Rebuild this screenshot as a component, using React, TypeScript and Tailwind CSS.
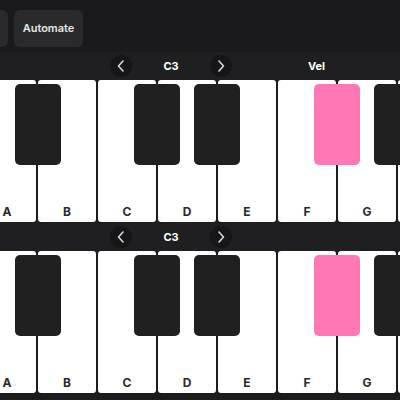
import React from "react";

const whites = ["A", "B", "C", "D", "E", "F", "G", ""];
const blacks: { left: number; pink?: boolean }[] = [
  { left: -46 + 22 },
  { left: 15 + 22 },
  { left: 134 + 22 },
  { left: 194 + 22 },
  { left: 314 + 22, pink: true },
  { left: 374 + 22 },
];

function Chevron({ dir }: { dir: "left" | "right" }) {
  return (
    <div className="w-[22px] h-[22px] rounded-full bg-[#161618] flex items-center justify-center">
      <svg width="12" height="14" viewBox="0 0 12 14" fill="none">
        {dir === "left" ? (
          <path d="M8 2 L3.5 7 L8 12" stroke="#d8d8d8" strokeWidth="1.6" strokeLinecap="round" strokeLinejoin="round" />
        ) : (
          <path d="M4 2 L8.5 7 L4 12" stroke="#d8d8d8" strokeWidth="1.6" strokeLinecap="round" strokeLinejoin="round" />
        )}
      </svg>
    </div>
  );
}

function Band({ vel }: { vel?: boolean }) {
  return (
    <div className="h-[28px] bg-[#1f1f21] flex items-center pl-[110px]">
      <Chevron dir="left" />
      <div className="w-[78px] text-center text-white text-[11px] font-bold">C3</div>
      <Chevron dir="right" />
      {vel && <div className="ml-[76px] text-white text-[11px] font-bold">Vel</div>}
    </div>
  );
}

function Keyboard() {
  return (
    <div className="h-[143px] bg-[#1c1c1e] overflow-hidden relative">
      <div className="flex gap-[2px] ml-[-22px] h-[142px] relative">
        {whites.map((n, i) => (
          <div
            key={i}
            className="w-[58px] shrink-0 h-full bg-white rounded-[3px] flex items-end justify-center pb-[2px]"
          >
            <span className="text-[12px] leading-[16px] font-bold text-[#2a2a2a]">{n}</span>
          </div>
        ))}
        {blacks.map((b, i) => (
          <div
            key={i}
            className={`absolute top-[4px] h-[81px] w-[46px] rounded-[5px] ${b.pink ? "bg-[#ff77b4]" : "bg-[#202020]"}`}
            style={{ left: b.left }}
          />
        ))}
      </div>
    </div>
  );
}

export default function App() {
  return (
    <div
      className="w-[400px] h-[400px] bg-[#1c1c1e] overflow-hidden"
      style={{ fontFamily: "Inter, 'Noto Sans', sans-serif" }}
    >
      <div className="h-[52px] bg-[#1a1a1c] flex items-start pt-[10px] gap-[6px] ml-[-40px]">
        <div className="w-[48px] h-[37px] rounded-[6px] bg-[#2a2a2c]" />
        <div className="w-[69px] h-[37px] rounded-[6px] bg-[#2a2a2c] flex items-center justify-center text-[11px] font-semibold text-[#e6e6e6]">
          Automate
        </div>
      </div>
      <Band vel />
      <Keyboard />
      <Band />
      <Keyboard />
    </div>
  );
}
